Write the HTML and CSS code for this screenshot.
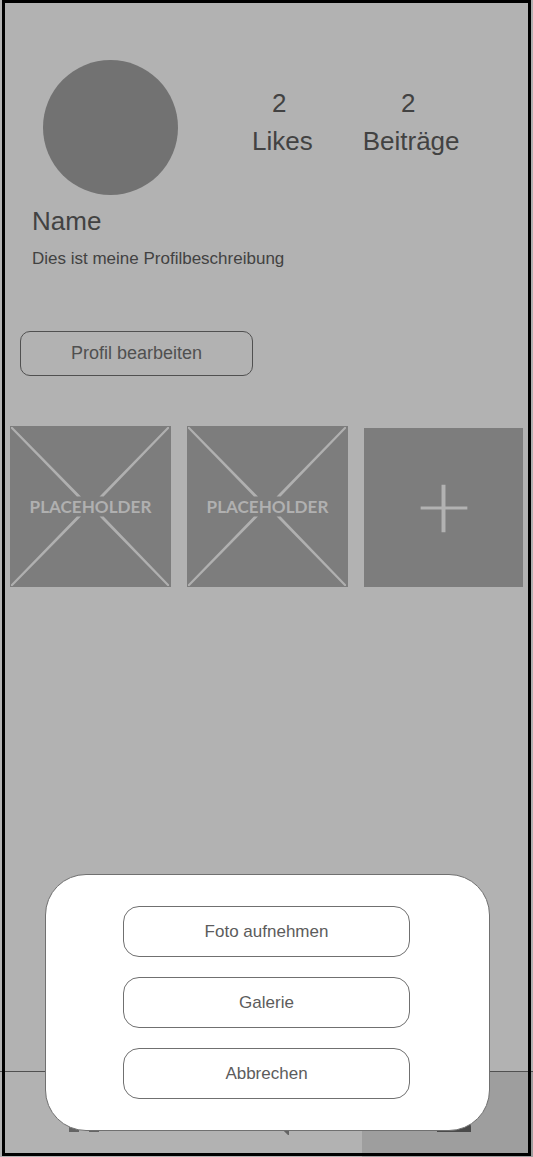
FILE: index.html
```html
<!DOCTYPE html>
<html lang="de">
<head>
<meta charset="utf-8">
<meta name="viewport" content="width=device-width, initial-scale=1">
<title>Profil</title>
<link rel="stylesheet" href="styles.css">
</head>
<body>
<div class="screen">
  <main class="profile">
    <header class="profile-head">
      <div class="avatar"></div>
      <div class="stats">
        <div class="stat"><span class="stat-value">2</span><span>Likes</span></div>
        <div class="stat"><span class="stat-value">2</span><span>Beiträge</span></div>
      </div>
    </header>
    <section class="bio">
      <h1 class="name">Name</h1>
      <p class="description">Dies ist meine Profilbeschreibung</p>
    </section>
    <button class="edit-button" type="button">Profil bearbeiten</button>
    <section class="gallery">
      <svg class="tile" viewBox="0 0 160 160" role="img" aria-label="Placeholder">
        <path class="tile-lines" d="M1 1h1.500L70.500 70h-4L1 2.500zM158 1h-1.500L89 70h4L158 2.500zM1 159h1.500L70.500 90h-4L1 157.500zM158 159h-1.500L89 90h4L158 157.500z"/>
        <text class="tile-text" x="80" y="86">PLACEHOLDER</text>
      </svg>
      <svg class="tile" viewBox="0 0 160 160" role="img" aria-label="Placeholder">
        <path class="tile-lines" d="M1 1h1.500L70.500 70h-4L1 2.500zM158 1h-1.500L89 70h4L158 2.500zM1 159h1.500L70.500 90h-4L1 157.500zM158 159h-1.500L89 90h4L158 157.500z"/>
        <text class="tile-text" x="80" y="86">PLACEHOLDER</text>
      </svg>
      <button class="tile add-tile" type="button" aria-label="Foto hinzufügen">
        <svg class="plus" viewBox="0 0 160 160"><path d="M78 57h4v48h-4zM57 79h47v3H57z"/></svg>
      </button>
    </section>
  </main>
  <nav class="tabs">
    <a class="tab tab-home" href="#home" aria-label="Start">
      <svg class="tab-icon" viewBox="0 0 40 40"><path d="M20 2L0 20h5v18h10V26h10v12h10V20h5z"/></svg>
    </a>
    <a class="tab tab-search" href="#search" aria-label="Suche">
      <svg class="tab-icon" viewBox="0 0 40 40"><path d="M16 2a14 14 0 1 0 8 25.500L38 41h1v-5L27 24A14 14 0 0 0 16 2zm0 5a9 9 0 1 1 0 18a9 9 0 0 1 0-18z"/></svg>
    </a>
    <a class="tab tab-active" href="#profile" aria-label="Profil">
      <svg class="tab-icon" viewBox="0 0 40 40"><path d="M20 2a9 9 0 0 1 0 18a9 9 0 0 1 0-18zM3 38v-5q0-9 17-9t17 9v5z"/></svg>
    </a>
  </nav>
  <div class="sheet" role="dialog" aria-label="Foto hinzufügen">
    <button class="sheet-button" type="button">Foto aufnehmen</button>
    <button class="sheet-button" type="button">Galerie</button>
    <button class="sheet-button" type="button">Abbrechen</button>
  </div>
</div>
</body>
</html>
```

FILE: styles.css
```css
* {
  box-sizing: border-box;
}

body {
  margin: 0;
  background: #b2b2b2;
  color: #424242;
  font-family: "Liberation Sans", Arial, sans-serif;
}

button {
  font-family: inherit;
  cursor: pointer;
}

.screen {
  position: relative;
  display: flex;
  flex-direction: column;
  min-height: 100vh;
}

/* device outline drawn above the page */
.screen::after {
  content: "";
  position: absolute;
  inset: 0 2px 1px;
  border: 3px solid #000;
  pointer-events: none;
}

.profile {
  flex: 1;
  padding: 60px 10px 0;
}

.profile-head {
  display: flex;
  padding-left: 33px;
}

.avatar {
  width: 135px;
  height: 135px;
  border-radius: 50%;
  background: #727272;
}

.stats {
  display: flex;
  gap: 50px;
  margin: 24px 0 0 74px;
  font-size: 26px;
  line-height: 38px;
}

.stat {
  display: flex;
  flex-direction: column;
  align-items: center;
}

.stat-value {
  padding-right: 6px;
}

.bio {
  padding: 7px 22px 0;
}

.name {
  margin: 0;
  font-size: 26px;
  font-weight: 400;
  line-height: 38px;
}

.description {
  margin: 9px 0 0;
  font-size: 17px;
  line-height: 20px;
}

.edit-button {
  display: block;
  width: 233px;
  height: 45px;
  margin: 62px 0 0 10px;
  border: 1px solid #505050;
  border-radius: 10px;
  background: none;
  color: #505050;
  font-size: 18px;
}

.gallery {
  display: grid;
  grid-template-columns: 161fr 161fr 159fr;
  align-items: end;
  gap: 16px;
  margin-top: 50px;
}

.tile {
  display: block;
  width: 100%;
  aspect-ratio: 1;
  background: #7d7d7d;
}

.tile-lines {
  fill: #b0b0b0;
}

.tile-text {
  fill: #b0b0b0;
  font-family: Lato, sans-serif;
  font-size: 17px;
  font-weight: 700;
  text-anchor: middle;
}

.add-tile {
  padding: 0;
  border: 0;
}

.plus {
  display: block;
  width: 100%;
  fill: #b2b2b2;
}

.tabs {
  display: grid;
  grid-template-columns: 181fr 181fr 171fr;
  height: 86px;
  border-top: 1px solid #505050;
}

.tab {
  display: flex;
  justify-content: center;
  padding-top: 22px;
}

.tab-home {
  padding-right: 14px;
}

.tab-search {
  padding-right: 4px;
}

.tab-active {
  padding-left: 12px;
  background: #9e9e9e;
}

.tab-icon {
  width: 40px;
  height: 40px;
  overflow: visible;
  fill: #646464;
}

.tab-active .tab-icon {
  fill: #4a4a4a;
}

.sheet {
  position: absolute;
  right: 43px;
  bottom: 26px;
  left: 45px;
  display: flex;
  flex-direction: column;
  align-items: center;
  gap: 20px;
  padding: 31px 79px 31px 77px;
  border: 1px solid #707070;
  border-radius: 41px;
  background: #fff;
}

.sheet-button {
  width: 287px;
  max-width: 100%;
  height: 51px;
  border: 1px solid #707070;
  border-radius: 16px;
  background: #fff;
  color: #5c5c5c;
  font-size: 17px;
}
```
